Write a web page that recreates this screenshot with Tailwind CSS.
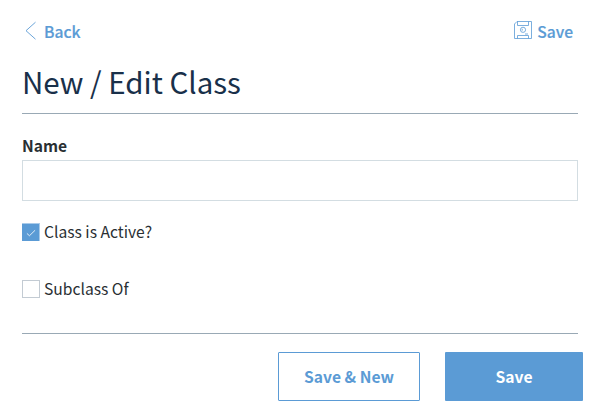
<!DOCTYPE html>
<html lang="en">
<head>
<meta charset="utf-8">
<title>New / Edit Class</title>
<script src="https://cdn.jsdelivr.net/npm/@tailwindcss/browser@4"></script>
</head>
<body class="h-[413px] overflow-hidden bg-white font-['Noto_Sans_CJK_SC','Noto_Sans',sans-serif] text-[#292f33]">
<main class="flex flex-col pl-[22px] pr-[18px] pt-5">
  <nav class="flex h-6 items-center justify-between pl-[3px] pr-[5px] text-[15.65px] leading-6 font-medium text-[#5b9bd5] [-webkit-text-stroke:0.2px_#5b9bd5]">
    <a class="flex items-center gap-2">
      <svg class="mb-[4px] h-[19px] w-[11px]" viewBox="0 0 11 19" fill="none" stroke="currentColor" stroke-width=".9"><path d="M10.5 1.2 1 9.7l9.5 8.5"/></svg>
      <span>Back</span>
    </a>
    <a class="flex items-center gap-[5px]">
      <svg class="mb-1 h-[18px] w-[18px]" viewBox="0 0 18 18" fill="none" stroke="currentColor" stroke-width=".8"><path d="M3 .5h14.5v17H.5V3zM3.5.5v4h11v-4M3.5 17.5v-3h11v3M11 13h3"/><circle cx="9" cy="8.8" r="2.6"/><path d="M8.2 7.8v1.8"/></svg>
      <span>Save</span>
    </a>
  </nav>
  <h1 class="mt-[14px] h-[55px] text-[29.5px] leading-[46px] font-normal whitespace-nowrap text-[#19304a]">New / Edit Class</h1>
  <hr class="border-[#99a9b5]">
  <label for="name" class="mt-[19px] h-[27px] text-[15.65px] leading-[25px] font-bold">Name</label>
  <input id="name" class="h-[41px] w-full border border-[#d3dde2] bg-white">
  <label class="mt-[19px] flex h-6 items-center gap-1 text-[15.65px] leading-6">
    <span class="flex size-[18px] items-center justify-center border-t border-r border-[#aacbea] bg-[#5b9bd5]"><svg class="size-[10px]" viewBox="0 0 11 11" fill="none" stroke="#fff" stroke-width=".9"><path d="m1 6 2.8 2.5L10 2.5"/></svg></span>
    <span>Class is Active?</span>
  </label>
  <label class="mt-[33px] flex h-6 items-center gap-1 text-[15.65px] leading-6">
    <span class="size-[18px] border border-[#c3cbd3]"></span>
    <span>Subclass Of</span>
  </label>
  <hr class="mt-8 border-[#99a9b5]">
  <div class="-mr-[5px] mt-[18px] flex justify-end gap-[25px] text-[15.65px] font-bold">
    <button class="h-[49px] w-[142px] rounded-[1px] border border-[#5b9bd5] text-[#5b9bd5]">Save &amp; New</button>
    <button class="h-[49px] w-[138px] rounded-[1px] bg-[#5b9bd5] text-white">Save</button>
  </div>
</main>
</body>
</html>
